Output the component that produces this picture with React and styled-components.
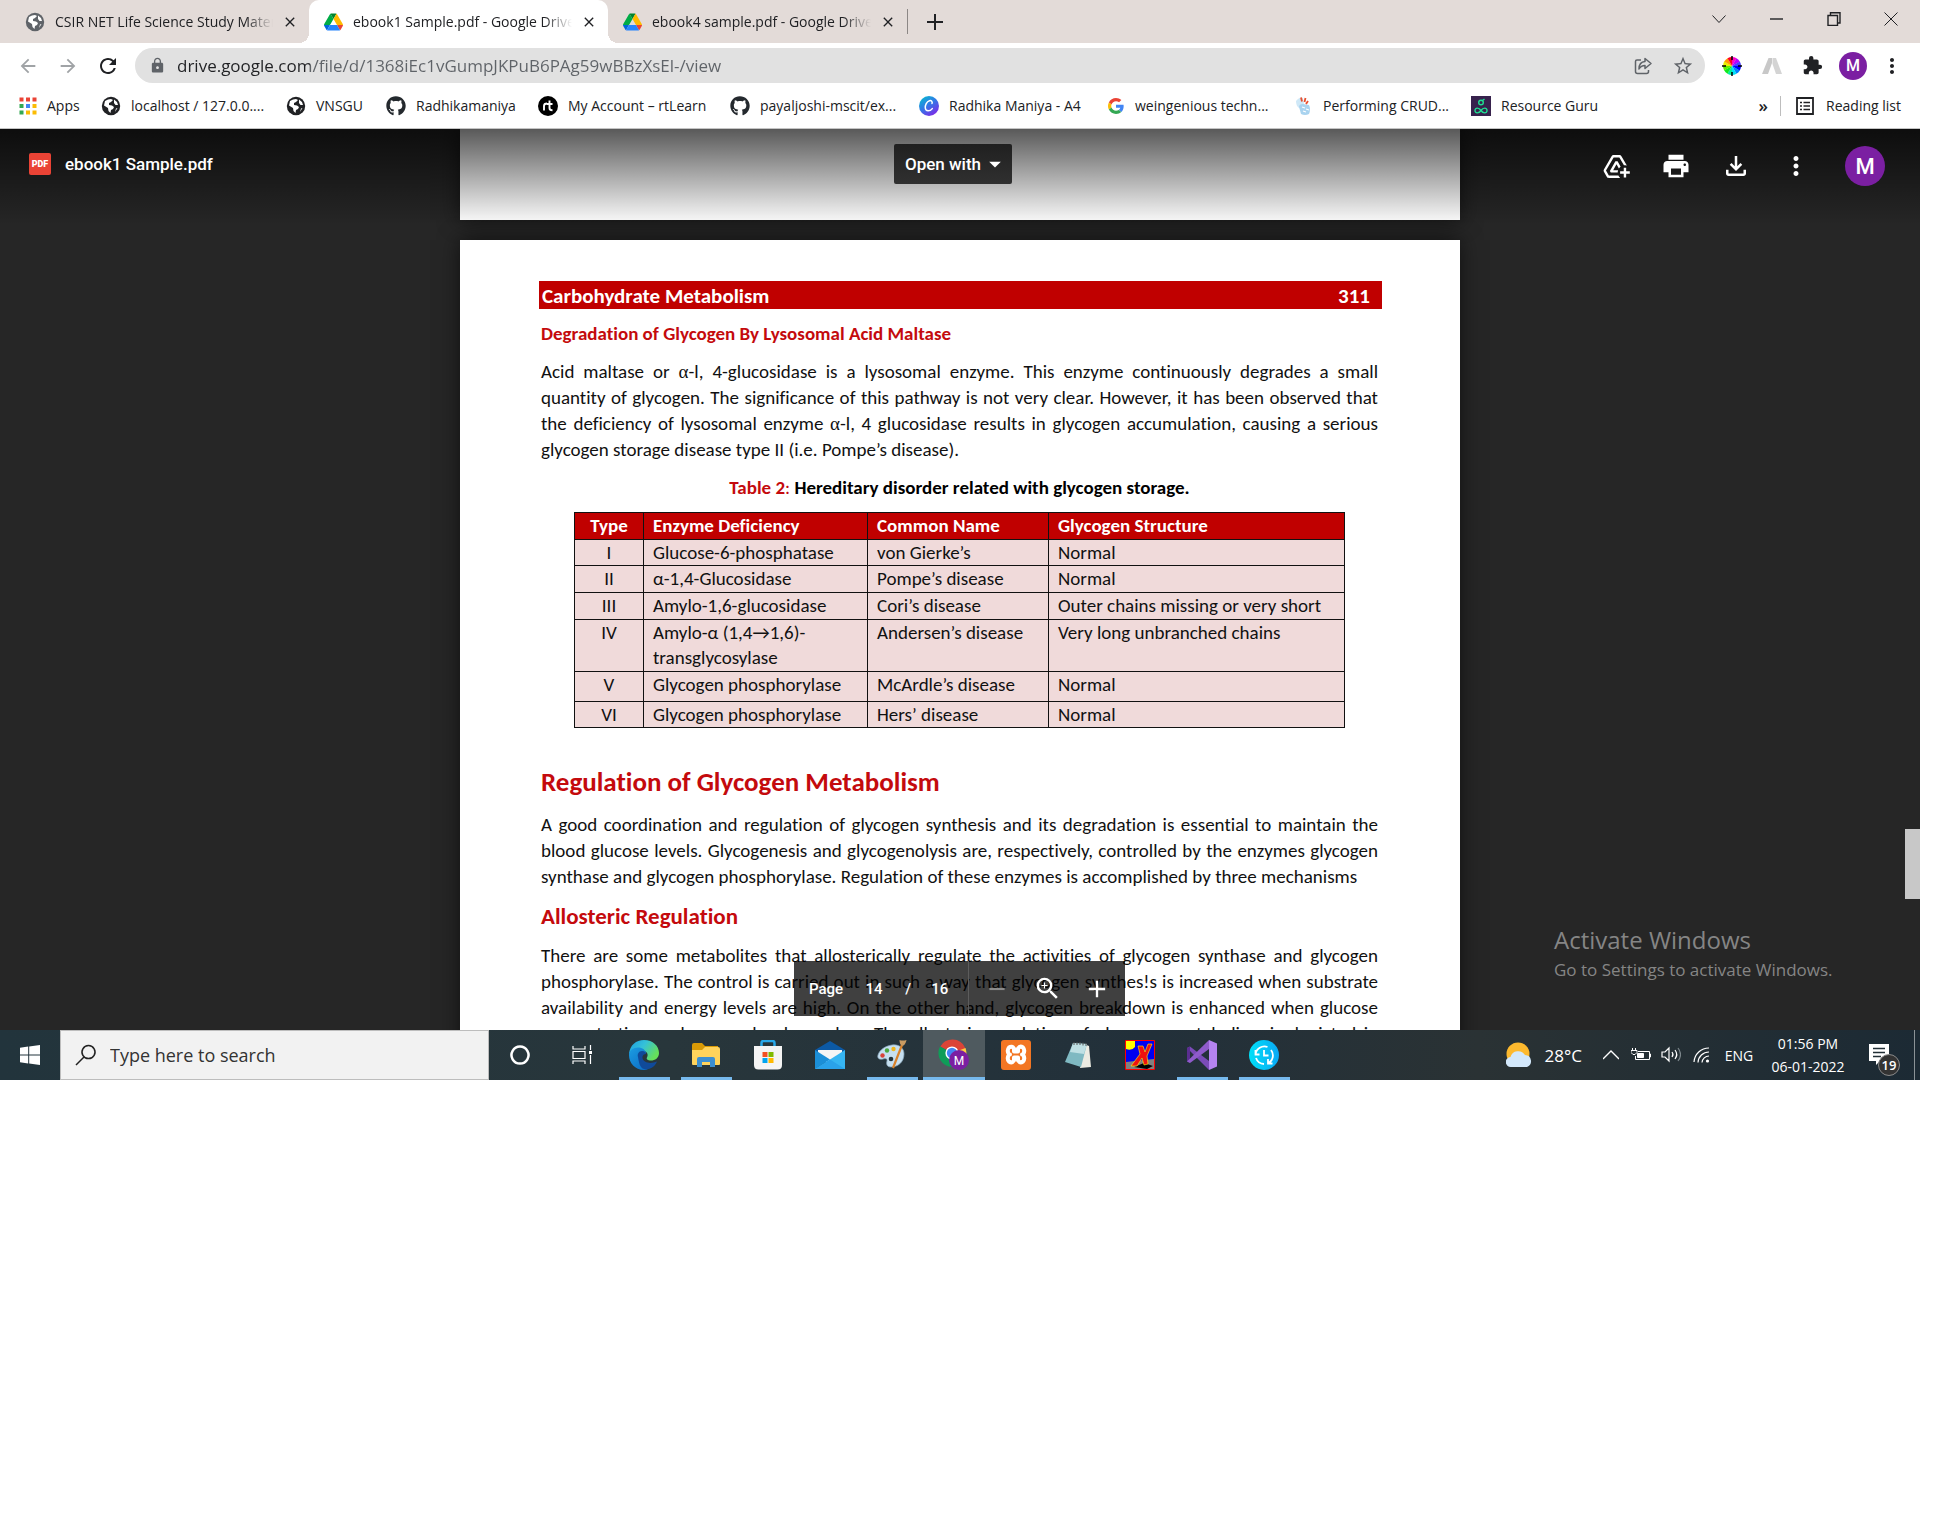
import React from "react";
import styled, { createGlobalStyle, css } from "styled-components";
import {
  MdAddToDrive, MdPrint, MdOutlineFileDownload, MdMoreVert, MdZoomIn, MdAdd, MdRemove,
  MdArrowBack, MdArrowForward, MdRefresh, MdLock, MdStarOutline, MdExtension, MdArrowDropDown,
  MdClose,
} from "react-icons/md";
import { FaGithub } from "react-icons/fa";

const ui = `"Segoe UI", "Open Sans", "Noto Sans", sans-serif`;
const doc = `Calibri, Carlito, Lato, sans-serif`;
const product = `Roboto, "Open Sans", sans-serif`;

const Global = createGlobalStyle`
  *, *::before, *::after { box-sizing: border-box; }
  body { margin: 0; background: #fff; font-family: ${ui}; color: #202124; }
  button { border: 0; padding: 0; background: none; color: inherit; font: inherit; cursor: pointer; }
  input { border: 0; padding: 0; background: none; outline: 0; font: inherit; min-width: 0; }
  a { color: inherit; text-decoration: none; }
  h1, h2, h3, p, table { margin: 0; }
  svg { display: block; flex: none; }
`;

const Screen = styled.div`
  display: flex;
  flex-direction: column;
  margin-right: 16px;
  overflow: hidden;
`;

/* ---------- browser frame ---------- */

const TabStrip = styled.header`
  display: flex;
  align-items: stretch;
  height: 43px;
  padding-left: 10px;
  background: #e3dbd8;
`;

const TabItem = styled.div`
  position: relative;
  display: flex;
  align-items: center;
  flex: 0 1 299px;
  min-width: 0;
  padding: 0 11px 0 15px;
  font-size: 14px;
  border-radius: 10px 10px 0 0;
  ${(p) => p.$active && css`
    background: #fff;
    &::before, &::after {
      content: "";
      position: absolute;
      bottom: 0;
      width: 10px;
      height: 10px;
    }
    &::before { left: -10px; background: radial-gradient(circle at 0 0, transparent 10px, #fff 10px); }
    &::after { right: -10px; background: radial-gradient(circle at 100% 0, transparent 10px, #fff 10px); }
  `}
`;

const TabTitle = styled.a`
  flex: 1;
  min-width: 0;
  margin: 0 9px 0 10px;
  overflow: hidden;
  white-space: nowrap;
  line-height: 20px;
  mask-image: linear-gradient(to right, #000 calc(100% - 28px), transparent);
`;

const TabDivider = styled.span`
  width: 1px;
  height: 25px;
  margin: 9px 0;
  background: #8c8785;
`;

const IconButton = styled.button`
  display: inline-flex;
  align-items: center;
  justify-content: center;
  flex: none;
  width: ${(p) => p.$w || 40}px;
  color: ${(p) => p.$color || "inherit"};
`;

const WindowControls = styled.div`
  display: flex;
  margin-left: auto;
  padding-bottom: 5px;
`;

const Toolbar = styled.nav`
  display: flex;
  align-items: center;
  padding: 5px 3px 5px 8px;
`;

const Omnibox = styled.form`
  display: flex;
  align-items: center;
  flex: 1;
  min-width: 0;
  height: 35px;
  margin: 0 7px;
  padding: 0 2px 0 14px;
  border-radius: 18px;
  background: #e1e1e1;
  color: #5f6368;
`;

const UrlInput = styled.input`
  flex: 1;
  height: 24px;
  margin-left: 11px;
  font-size: 17px;
  color: #5f6368;
  background: linear-gradient(to right, #202124 133px, #5f6368 133px);
  background-clip: text;
  -webkit-text-fill-color: transparent;
`;

const Avatar = styled.button`
  flex: none;
  width: ${(p) => p.$size}px;
  height: ${(p) => p.$size}px;
  margin-left: ${(p) => p.$gap}px;
  border-radius: 50%;
  background: #7b1fa2;
  color: #fff;
  font-family: ${product};
  font-size: ${(p) => p.$font}px;
  font-weight: 500;
`;

const BookmarkBar = styled.nav`
  display: flex;
  align-items: center;
  height: 41px;
  padding: 0 19px 4px 19px;
  border-bottom: 1px solid #c4c4c4;
  font-size: 14px;
  line-height: 20px;
`;

const Bookmark = styled.a`
  display: flex;
  align-items: center;
  flex: ${(p) => (p.$w ? `0 1 ${p.$w}px` : "none")};
  gap: ${(p) => p.$gap || 10}px;
  min-width: 0;
  white-space: nowrap;
`;

const Spacer = styled.span`
  flex: 1;
`;

const MoreBookmarks = styled.button`
  font-size: 17px;
  font-weight: 600;
`;

const Rule = styled.span`
  width: 1px;
  height: 20px;
  margin: 0 15px 0 12px;
  background: #bdbdbd;
`;

/* ---------- document viewer ---------- */

const Viewer = styled.main`
  position: relative;
  height: 901px;
  overflow: hidden;
  background: #262626;
`;

const Pages = styled.div`
  display: flex;
  flex-direction: column;
  align-items: center;
  gap: 20px;
`;

const Sheet = styled.article`
  width: 1000px;
  max-width: 100%;
  min-height: ${(p) => p.$min}px;
  padding: 41px 78px 0 79px;
  background: #fff;
  box-shadow: 0 0 20px rgba(0, 0, 0, 0.6);
  color: #111;
  font-family: ${doc};
  font-size: 19px;
  font-variant-ligatures: none;
  line-height: 26px;
`;

const RunningHead = styled.header`
  display: flex;
  justify-content: space-between;
  padding: 2px 12px 0 3px;
  background: #c00000;
  color: #fff;
  font-size: 21px;
  font-weight: 700;
`;

const Body = styled.div`
  padding: 0 4px 0 2px;
`;

const Heading = styled.h2`
  color: #c40a0d;
  font-size: ${(p) => p.$size}px;
  font-weight: 700;
  line-height: ${(p) => p.$line || 26}px;
  padding: ${(p) => p.$pad};
`;

const Para = styled.p`
  text-align: left;
`;

const Line = styled.span`
  display: block;
  white-space: nowrap;
  text-align: justify;
  text-align-last: ${(p) => (p.$end ? "left" : "justify")};
`;

const Greek = styled.i`
  font-family: "Liberation Serif", serif;
  font-style: normal;
  line-height: 1;
`;

const DataTable = styled.table`
  width: 771px;
  max-width: 100%;
  margin: 0 auto;
  border-collapse: collapse;
  table-layout: fixed;
  caption {
    padding: 12px 0 11px;
    font-weight: 700;
    color: #000;
  }
  caption span { color: #c40a0d; }
  caption i { font-style: normal; font-weight: 400; }
  th, td {
    padding: 0 0 0 9px;
    border: 1px solid #111;
    text-align: left;
    vertical-align: top;
    line-height: 25px;
    background: #f0dada;
    white-space: nowrap;
  }
  th { background: #c00000; color: #fff; }
  th:first-child, td:first-child { padding: 0; text-align: center; }
`;

const Row = styled.tr`
  height: ${(p) => p.$h || 27}px;
`;

const ViewerHeader = styled.header`
  position: absolute;
  inset: 0 0 auto 0;
  display: grid;
  grid-template-columns: 1fr auto 1fr;
  align-items: start;
  height: 96px;
  padding: 15px 35px 0 21px;
  background: linear-gradient(rgba(0, 0, 0, 0.65), rgba(0, 0, 0, 0));
  color: #fff;
  font-family: ${product};
  font-weight: 500;
`;

const FileName = styled.h1`
  display: flex;
  align-items: center;
  gap: 14px;
  height: 40px;
  padding-left: 8px;
  font-size: 17px;
  font-weight: 500;
`;

const PdfBadge = styled.span`
  width: 22px;
  border-radius: 2px;
  background: #ea4335;
  font-size: 9px;
  font-weight: 900;
  line-height: 22px;
  text-align: center;
`;

const OpenWith = styled.button`
  display: flex;
  align-items: center;
  height: 40px;
  padding: 0 3px 0 11px;
  border-radius: 2px;
  background: linear-gradient(#202020, #303030);
  font-size: 17px;
`;

const Actions = styled.div`
  display: flex;
  align-items: center;
  justify-content: flex-end;
  height: 44px;
`;

const Pager = styled.form`
  position: absolute;
  left: 794px;
  bottom: 14px;
  display: flex;
  align-items: center;
  width: 331px;
  height: 55px;
  background: rgba(0, 0, 0, 0.75);
  color: #fff;
  font-family: ${product};
  font-size: 15px;
  font-weight: 500;
`;

const PageField = styled.label`
  display: flex;
  align-items: center;
  width: 176px;
  padding-left: 15px;
  input { width: 38px; color: #fff; text-align: center; margin: 0 12px; }
  span { width: 26px; }
`;

const ZoomTools = styled.div`
  display: flex;
  flex: 1;
  align-self: stretch;
  border-left: 1px solid #5c5c5c;
`;

const ScrollThumb = styled.div`
  position: absolute;
  top: 700px;
  right: 0;
  width: 15px;
  height: 70px;
  background: #c8c8c8;
`;

const Watermark = styled.aside`
  position: absolute;
  right: 82px;
  bottom: 47px;
  width: 284px;
  color: #858585;
  font-size: 17px;
  line-height: 26px;
  white-space: nowrap;
  strong { display: block; font-size: 24px; font-weight: 400; line-height: 34px; }
`;

/* ---------- taskbar ---------- */

const Taskbar = styled.footer`
  display: flex;
  align-items: stretch;
  height: 50px;
  background: linear-gradient(to right, #22343c, #28363b 35%, #22303a 60%, #2a3234 77%, #1c2a34);
  color: #fff;
`;

const SearchBox = styled.label`
  display: flex;
  align-items: center;
  gap: 13px;
  width: 429px;
  padding-left: 14px;
  border: 1px solid #bdbdbd;
  background: #f2f2f2;
  color: #222;
  font-size: 18px;
  input { flex: 1; color: #333; }
  input::placeholder { color: #333; opacity: 1; }
`;

const AppButton = styled.button`
  position: relative;
  display: flex;
  align-items: center;
  justify-content: center;
  flex: none;
  width: 62px;
  background: ${(p) => (p.$active ? "#4f5a5f" : "transparent")};
  &::after {
    content: "";
    position: absolute;
    bottom: 0;
    width: ${(p) => (p.$active ? 62 : 51)}px;
    height: 3px;
    background: ${(p) => (p.$open ? "#76b9ed" : "transparent")};
  }
`;

const Tray = styled.div`
  display: flex;
  align-items: center;
  margin-left: auto;
  font-size: 14px;
`;

const Weather = styled.button`
  display: flex;
  align-items: center;
  gap: 12px;
  font-size: 17px;
  margin-right: 14px;
`;

const Clock = styled.time`
  width: 96px;
  font-size: 14px;
  line-height: 23px;
  text-align: center;
`;

const Notice = styled.button`
  position: relative;
  width: 58px;
  height: 50px;
  padding-left: 13px;
`;

const Count = styled.span`
  position: absolute;
  left: 22px;
  top: 24px;
  width: 22px;
  border: 1px solid #8a8a8a;
  border-radius: 50%;
  background: #333;
  font-size: 13px;
  font-weight: 600;
  line-height: 20px;
  text-align: center;
`;

const ShowDesktop = styled.button`
  width: 6px;
  height: 50px;
  border-left: 1px solid #8a9296;
`;

/* ---------- drawings ---------- */

const Globe = ({ color = "#202124" }) => (
  <svg width="20" height="20" viewBox="0 0 20 20">
    <circle cx="10" cy="10" r="9.2" fill={color} />
    <path d="M4 5 Q7 3 10 3 L12 4 L10 6 L8 7 L8 9 L11 9.5 L13 11 L12 13 L10 14 L9.5 17 L7.5 15 L7 12 L3 9.5Z M13 3.5 L16 6 L17 9 L14.5 9 L13 7Z M15 12.5 L16.5 12 L14 16Z" fill="#fff" />
  </svg>
);
const Drive = () => (
  <svg width="19" height="18" viewBox="0 0 87.3 78">
    <path d="m6.6 66.85 3.85 6.65c.8 1.4 1.95 2.5 3.3 3.3l13.75-23.8h-27.5c0 1.55.4 3.1 1.2 4.5z" fill="#0066da" />
    <path d="m43.65 25-13.75-23.8c-1.35.8-2.5 1.9-3.3 3.3l-25.4 44a9.06 9.06 0 0 0 -1.2 4.5h27.5z" fill="#00ac47" />
    <path d="m73.55 76.8c1.35-.8 2.5-1.9 3.3-3.3l1.6-2.75 7.65-13.25c.8-1.4 1.2-2.95 1.2-4.5h-27.5l5.85 11.5z" fill="#ea4335" />
    <path d="m43.65 25 13.75-23.8c-1.35-.8-2.9-1.2-4.5-1.2h-18.5c-1.6 0-3.15.45-4.5 1.2z" fill="#00832d" />
    <path d="m59.8 53h-32.3l-13.75 23.8c1.35.8 2.9 1.2 4.5 1.2h50.8c1.6 0 3.15-.45 4.5-1.2z" fill="#2684fc" />
    <path d="m73.4 26.5-12.7-22c-.8-1.4-1.95-2.5-3.3-3.3l-13.75 23.8 16.15 28h27.45c0-1.55-.4-3.1-1.2-4.5z" fill="#ffba00" />
  </svg>
);
const AppsGrid = () => {
  const c = ["#ea4335", "#ea4335", "#ea4335", "#34a853", "#4285f4", "#fbbc04", "#34a853", "#fbbc04", "#fbbc04"];
  return (
    <svg width="18" height="18" viewBox="0 0 18 18">
      {c.map((f, i) => <rect key={i} x={(i % 3) * 6.5 + 0.5} y={Math.floor(i / 3) * 6.5 + 0.5} width="4" height="4" fill={f} />)}
    </svg>
  );
};
const RtLogo = () => (
  <svg width="20" height="20" viewBox="0 0 20 20">
    <circle cx="10" cy="10" r="10" fill="#000" />
    <path d="M6 14.5V10q0-2.5 3-2.5M11.5 4.5V12q0 2.3 3 2.3M9 8h5.5" fill="none" stroke="#fff" strokeWidth="1.9" />
  </svg>
);
const CanvaLogo = () => (
  <svg width="20" height="20" viewBox="0 0 20 20">
    <defs><linearGradient id="cv" x1="0" y1="0" x2=".7" y2="1"><stop offset="0" stopColor="#00c4cc" /><stop offset=".5" stopColor="#2f7be6" /><stop offset="1" stopColor="#7d2ae8" /></linearGradient></defs>
    <circle cx="10" cy="10" r="10" fill="url(#cv)" />
    <path d="M13 7.5c.8-2-.7-3.3-2.5-2.8C7.7 5.5 6 9 6.3 12c.4 3.600 4.400 3.800 7 .6" fill="none" stroke="#fff" strokeWidth="1.5" strokeLinecap="round" />
  </svg>
);
const GoogleG = () => (
  <svg width="18" height="18" viewBox="-3 -3 54 54">
    <path fill="#EA4335" d="M24 9.500c3.540 0 6.710 1.220 9.210 3.600l6.850-6.850C35.900 2.380 30.470 0 24 0 14.620 0 6.510 5.380 2.560 13.220l7.980 6.190C12.430 13.720 17.740 9.500 24 9.500z" />
    <path fill="#4285F4" d="M46.980 24.550c0-1.570-.15-3.090-.38-4.550H24v9.020h12.940c-.58 2.960-2.260 5.480-4.780 7.180l7.730 6c4.510-4.180 7.090-10.360 7.090-17.650z" />
    <path fill="#FBBC05" d="M10.530 28.590c-.48-1.450-.76-2.990-.76-4.590s.27-3.140.76-4.590l-7.980-6.190C.92 16.460 0 20.120 0 24s.92 7.540 2.560 10.780l7.970-6.190z" />
    <path fill="#34A853" d="M24 48c6.480 0 11.930-2.130 15.890-5.810l-7.730-6c-2.150 1.450-4.920 2.300-8.160 2.300-6.260 0-11.570-4.220-13.470-9.910l-7.980 6.190C6.510 42.620 14.620 48 24 48z" />
  </svg>
);
const CrudIcon = () => (
  <svg width="20" height="20" viewBox="0 0 20 20">
    <path d="M3 5q4-5 7-3l1 6-5 4q-3-2-3-7z" fill="#cfe8f7" />
    <path d="M6 11q0-3 4-3l6 1q2 4 0 9-4 2-8 0-1-4-2-7z" fill="#a9d3ef" />
    <path d="M8 1.500l1 4M12.500 2l-1 4M15 5l-2 3" stroke="#e8502f" strokeWidth="1.800" />
    <path d="M9 11l3 1M13 13l3 1M10 15l3 1" stroke="#fff" strokeWidth="1.200" />
  </svg>
);
const GuruIcon = () => (
  <svg width="20" height="20" viewBox="0 0 20 20">
    <path d="M0 0h20v20H0z" fill="#37224d" />
    <g fill="none" stroke="#1fdf92" strokeWidth="1.400">
      <circle cx="10" cy="6.500" r="2.300" /><path d="M11.500 4.500L13.500 3" />
      <path d="M10 14.500c-2-3-6-3.200-6 0s4 3 6 0 6-3.200 6 0-4 3-6 0z" />
    </g>
  </svg>
);
const ListIcon = () => (
  <svg width="18" height="18" viewBox="0 0 18 18" fill="none" stroke="#202124" strokeWidth="1.800">
    <path d="M1 1h16v16H1z" /><path d="M4 5.500h2M4 9h2M4 12.500h2M7.500 5.500H14M7.500 9H14M7.500 12.500H14" strokeWidth="1.600" />
  </svg>
);
const ShareIcon = () => (
  <svg width="20" height="20" viewBox="0 0 20 20" fill="none" stroke="#5f6368" strokeWidth="1.500" strokeLinejoin="round">
    <path d="M8 4H4Q2.500 4 2.500 5.500v10Q2.500 17.500 4.500 17.500h9q2 0 2-2V14" />
    <path d="M12 2.500L18 7.500l-6 5V9.500q-4 0-6 3.500 0-7 6-7.500z" />
  </svg>
);
const Wheel = () => {
  const c = ["#ff00c8", "#b400ff", "#4a3cff", "#0000ff", "#0080ff", "#00e0f8", "#00f0a0", "#10e820", "#60f000", "#e8f000", "#ff9a00", "#ff0020"];
  return (
    <svg width="20" height="20" viewBox="-10 -10 20 20">
      {c.map((f, i) => {
        const a = ((i * 30 - 90) * Math.PI) / 180, b = ((i * 30 - 59) * Math.PI) / 180;
        return <path key={i} fill={f} d={`M0 0L${9 * Math.cos(a)} ${9 * Math.sin(a)}A9 9 0 0 1 ${9 * Math.cos(b)} ${9 * Math.sin(b)}Z`} />;
      })}
      <path d="M0-10v4M0 10V6M-10 0h4M10 0H6" stroke="#000" strokeWidth="1.500" />
    </svg>
  );
};
const AdIcon = () => (
  <svg width="20" height="18" viewBox="0 0 20 18">
    <path d="M0 17L6.500 1H10v5L6 17z" fill="#c8c8c8" /><path d="M10.500 1H14l6 16h-6L10.500 7z" fill="#d4d4d4" />
  </svg>
);
const Thin = ({ d, size = 14, width = 1, color = "currentColor" }) => (
  <svg width={size} height={size} viewBox={`0 0 ${size} ${size}`} fill="none" stroke={color} strokeWidth={width}><path d={d} /></svg>
);

const WinLogo = () => (
  <svg width="20" height="20" viewBox="0 0 20 20" fill="#fff"><path d="M0 2.800L8.200 1.600V9.500H0zM9.200 1.500L20 0v9.500H9.200zM0 10.500h8.200v7.900L0 17.200zM9.200 10.500H20V20L9.200 18.500z" /></svg>
);
const TaskView = () => (
  <svg width="20" height="20" viewBox="0 0 20 20" fill="none" stroke="#fff" strokeWidth="1.200">
    <path d="M1 1v3h12V1M1 19v-3h12v3M1 6.500h12v7H1zM18.500 0v5M18.500 10v9" /><path d="M17 6h3v3h-3z" fill="#fff" stroke="none" />
  </svg>
);
const Edge = () => (
  <svg width="30" height="30" viewBox="0 0 30 30">
    <defs>
      <linearGradient id="e1" x1="0" y1="0" x2="1" y2=".5"><stop offset="0" stopColor="#1b9de2" /><stop offset=".5" stopColor="#35c1d8" /><stop offset="1" stopColor="#66e05a" /></linearGradient>
      <linearGradient id="e2" x1="0" y1="0" x2="1" y2="1"><stop offset="0" stopColor="#1b9de2" /><stop offset="1" stopColor="#0a64c0" /></linearGradient>
    </defs>
    <path d="M0 14C1 5 7 0 15 0c9 0 15 6 15 13 0 5-4 7.500-8 7.500-3.500 0-5-1.500-4-3 1.800-3 0-7-5-7S3 11 0 14z" fill="url(#e1)" />
    <path d="M0 15C0 10 5 7 10 7.500c4 .5 7 3 7 6-4-2-7 1-6 5 1 5 6 8 13 6.500C21 28.500 18 30 15 30 6 30 0 23 0 15z" fill="url(#e2)" />
    <path d="M9 17c-1-3 1-6 4-6 3 0 4 1.500 4 3-4 0-5 5-1 7.500 4 2.300 8 1.500 12 0-3 7-9 8.500-13 7.500S10 23 9 17z" fill="#104a9a" />
  </svg>
);
const Folder = () => (
  <svg width="28" height="24" viewBox="0 0 28 24">
    <path d="M0 2Q0 0 2 0h8l3 3h13v6H0z" fill="#d99a06" /><path d="M0 7h10l3-3h13q2 0 2 2v15q0 1-1 1H1q-1 0-1-1z" fill="#ffd35c" />
    <path d="M5 24v-8q0-2 2-2h14q2 0 2 2v8h-5v-5h-8v5z" fill="#3d8fd1" />
  </svg>
);
const Store = () => (
  <svg width="30" height="30" viewBox="0 0 30 30">
    <path d="M8.500 9V3q0-2 2-2h9q2 0 2 2v6" fill="none" stroke="#28a8ea" strokeWidth="2.500" />
    <path d="M1 6h28v19q0 4.500-4.500 4.500h-19Q1 29.500 1 25z" fill="#f4f4f4" />
    <path d="M9.500 12h5v5h-5z" fill="#f25022" /><path d="M15.500 12h5v5h-5z" fill="#7fba00" /><path d="M9.500 18h5v5h-5z" fill="#00a4ef" /><path d="M15.500 18h5v5h-5z" fill="#ffb900" />
  </svg>
);
const Mail = () => (
  <svg width="30" height="28" viewBox="0 0 30 28">
    <path d="M0 9L15 0l15 9v5H0z" fill="#0c59a4" /><path d="M3 9h24v12H3z" fill="#f5f5f5" />
    <path d="M0 9l15 9.500L0 28z" fill="#1b8fd8" /><path d="M30 9v19H0z" fill="#36b5f2" /><path d="M15 18.500L30 28H0z" fill="#2aa2ea" />
  </svg>
);
const Paint = () => (
  <svg width="30" height="30" viewBox="0 0 30 30">
    <path d="M15 5c7-1 12 3 12 9 0 8-6 13-13 13-4 0-5-3-4-6 .6-2-1-3-4-2-4 1-6-1-5-4C2.500 10 8 6 15 5z" fill="#c6dff0" stroke="#8aa9bd" strokeWidth=".7" />
    <circle cx="5.500" cy="15.500" r="2.200" fill="#d8433a" /><circle cx="10" cy="10.500" r="2.200" fill="#4ba83f" /><circle cx="16.500" cy="9" r="2.200" fill="#eeb620" /><circle cx="14" cy="19" r="2.300" fill="#25343b" />
    <path d="M25 5L16 28" stroke="#d9822b" strokeWidth="2.200" /><path d="M22.500 0q3 1 7 0-1 5-4 6-3-1-3-6z" fill="#c99b62" />
  </svg>
);
const Chrome = () => (
  <svg width="34" height="34" viewBox="-1 0 34 34">
    <path d="M14 15L2.300 8.500A14 14 0 0 1 27 9.500L27.500 12z" fill="#db4437" />
    <path d="M14 15l13.500-5a14 14 0 0 1-12.500 19z" fill="#ffcd40" />
    <path d="M14 15L2 8.500A14 14 0 0 0 14 29z" fill="#0f9d58" />
    <circle cx="14" cy="15" r="6.600" fill="#fff" /><circle cx="14" cy="15" r="5.200" fill="#4285f4" />
    <circle cx="21" cy="22" r="10" fill="#7b1fa2" /><text x="21" y="26.500" textAnchor="middle" fill="#fff" fontFamily="Roboto, sans-serif" fontSize="12">M</text>
  </svg>
);
const Xampp = () => (
  <svg width="30" height="30" viewBox="0 0 30 30">
    <rect width="30" height="30" rx="3" fill="#f37623" />
    <path d="M9 14.500H8q-2.500-4 0-7 3-2 5 1v3h4v-3q2-3 5-1 2.500 3 0 7h-1 1q2.500 4 0 7-3 2-5-1v-3h-4v3q-2 3-5 1-2.500-3 0-7z" fill="none" stroke="#fff" strokeWidth="4" strokeLinejoin="round" />
  </svg>
);
const Notepad = () => (
  <svg width="28" height="28" viewBox="0 0 28 28">
    <path d="M20 3l5 2 2 21-11 1z" fill="#ecebe2" /><path d="M9 2l14 1-6 23-16-5z" fill="#7fb9c2" /><path d="M9 2l14 1-3 10-14-2z" fill="#bfe0e4" />
    <path d="M10 1v3M13 1v3M16 1v3M19 1.500v3M22 2v3" stroke="#555" />
  </svg>
);
const Xming = () => (
  <svg width="30" height="30" viewBox="0 0 30 30">
    <path d="M1 1h28v28H1z" fill="#0000f0" /><path d="M1 22l28-3v10H1z" fill="#808080" /><path d="M1 1h9v6q-3 4-9 2z" fill="#ffff00" /><path d="M9 27l10-4 9 3-6 3z" fill="#000" />
    <path d="M13 6h5l2 6 3-8h4l-5 12 1 8-4 1-2-7-5 8H6l9-12z" fill="#f01010" stroke="#ffff00" strokeWidth=".6" /><path d="M.5.5h29v29H.5z" fill="none" stroke="#f00" />
  </svg>
);
const VisualStudio = () => (
  <svg width="30" height="30" viewBox="0 0 30 30">
    <path d="M0 8l3-1.500L22 21v9z" fill="#7b4bb8" /><path d="M0 8l3-1.500V23L0 21.500z" fill="#5b2e91" /><path d="M0 21.500L22 0v9L3 23z" fill="#8f5bcb" /><path d="M22 0l8 3.500v23L22 30z" fill="#b583f0" />
  </svg>
);
const SyncApp = () => (
  <svg width="30" height="30" viewBox="0 0 30 30">
    <defs><linearGradient id="sy"><stop offset="0" stopColor="#00e0f8" /><stop offset="1" stopColor="#0aa8f5" /></linearGradient></defs>
    <circle cx="15" cy="15" r="15" fill="url(#sy)" />
    <g fill="none" stroke="#fff" strokeWidth="1.800"><path d="M6.500 10v4.500h4M6.500 14.500a9 9 0 0 1 12-7.500M7 18a9 9 0 0 0 8 6M19 23.500a9 9 0 0 0 3-13.500M19 19v4.500h4.500M15 10v5.500h4.500" /></g>
  </svg>
);
const Sun = () => (
  <svg width="27" height="26" viewBox="0 0 27 26">
    <circle cx="12" cy="12" r="11.500" fill="#fdb92e" />
    <path d="M5 25a5 5 0 0 1-.5-10A8 8 0 0 1 19 13a6.200 6.200 0 0 1 2 12z" fill="#d3e8fb" />
  </svg>
);
const Battery = () => (
  <svg width="20" height="14" viewBox="0 0 20 14" fill="none" stroke="#fff"><path d="M7 3.500h11.500v8H4.500V8M18.500 6h1v3h-1M1.500 0v3M4.500 0v3M0 2.500h6v2L4 6.500H2L0 4.500z" /><path d="M6.500 5.500h6v4h-6z" fill="#fff" /></svg>
);
const Sound = () => (
  <svg width="20" height="18" viewBox="0 0 20 18" fill="none" stroke="#fff" strokeWidth="1.200"><path d="M1 6h3l4-4v13l-4-4H1zM11 6q2 2.500 0 5M14 4q3.500 4.500 0 9" /><path d="M17 2q5 6.500 0 13" stroke="#7d878c" /></svg>
);
const Wifi = () => (
  <svg width="18" height="18" viewBox="0 0 18 18" fill="none" stroke="#fff" strokeWidth="1.200"><path d="M1 16A15 15 0 0 1 16 2M5 16.500A11 11 0 0 1 16 6M9 16.500A7 7 0 0 1 16 10" /><circle cx="14.500" cy="15" r="1.600" fill="#fff" stroke="none" /></svg>
);

/* ---------- data ---------- */

const tabs = [
  { title: "CSIR NET Life Science Study Material", icon: <Globe color="#5f6368" /> },
  { title: "ebook1 Sample.pdf - Google Drive", icon: <Drive />, active: true },
  { title: "ebook4 sample.pdf - Google Drive", icon: <Drive /> },
];

const bookmarks = [
  ["Apps", <AppsGrid />, 82],
  ["localhost / 127.0.0....", <Globe />, 185],
  ["VNSGU", <Globe />, 100],
  ["Radhikamaniya", <FaGithub size={20} color="#24292e" />, 152],
  ["My Account – rtLearn", <RtLogo />, 192],
  ["payaljoshi-mscit/ex...", <FaGithub size={20} color="#24292e" />, 189],
  ["Radhika Maniya - A4", <CanvaLogo />, 188],
  ["weingenious techn...", <GoogleG />, 186],
  ["Performing CRUD...", <CrudIcon />, 178],
  ["Resource Guru", <GuruIcon />, 130],
];

const disorders = [
  ["I", "Glucose-6-phosphatase", "von Gierke’s", "Normal", 26],
  ["II", "α-1,4-Glucosidase", "Pompe’s disease", "Normal", 27],
  ["III", "Amylo-1,6-glucosidase", "Cori’s disease", "Outer chains missing or very short", 27],
  ["IV", <>Amylo-α (1,4→1,6)-<br />transglycosylase</>, "Andersen’s disease", "Very long unbranched chains", 52],
  ["V", "Glycogen phosphorylase", "McArdle’s disease", "Normal", 30],
  ["VI", "Glycogen phosphorylase", "Hers’ disease", "Normal", 26],
];

const apps = [
  ["Cortana", <Thin size={20} width={2.5} d="M10 1.500a8.500 8.500 0 1 0 .01 0z" />],
  ["Task view", <TaskView />],
  ["Edge", <Edge />, true],
  ["File Explorer", <Folder />, true],
  ["Store", <Store />],
  ["Mail", <Mail />],
  ["Paint", <Paint />, true],
  ["Chrome", <Chrome />, true, true],
  ["XAMPP", <Xampp />],
  ["Notepad", <Notepad />],
  ["Xming", <Xming />],
  ["Visual Studio", <VisualStudio />, true],
  ["Sync", <SyncApp />, true],
];

const Text = ({ lines, ragged }) => (
  <Para>
    {lines.map((l, i) => <Line key={i} $end={ragged && i === lines.length - 1}>{l}</Line>)}
  </Para>
);

export default function App() {
  const stop = (e) => e.preventDefault();
  return (
    <Screen>
      <Global />
      <TabStrip>
        {tabs.map((t) => (
          <TabItem key={t.title} $active={t.active}>
            {t.icon}
            <TabTitle href="#">{t.title}</TabTitle>
            <IconButton $w={16} aria-label="Close tab"><MdClose size={16} /></IconButton>
          </TabItem>
        ))}
        <TabDivider />
        <IconButton $w={54} aria-label="New tab"><Thin size={16} width={2} d="M8 0v16M0 8h16" /></IconButton>
        <WindowControls>
          <IconButton $w={58} aria-label="Search tabs"><Thin d="M.5 3.500l6.500 7 6.500-7" /></IconButton>
          <IconButton $w={57} aria-label="Minimize"><Thin width={1.400} d="M0 7h13" /></IconButton>
          <IconButton $w={57} aria-label="Restore"><Thin width={1.400} d="M1 3.500h9.500v10H1zM3.500 3V.800h9.500V11H11" /></IconButton>
          <IconButton $w={58} aria-label="Close"><Thin d="M.5.5l13 13M13.500.5l-13 13" /></IconButton>
        </WindowControls>
      </TabStrip>

      <Toolbar>
        <IconButton $color="#a0a3a6" aria-label="Back"><MdArrowBack size={22} /></IconButton>
        <IconButton $color="#a0a3a6" aria-label="Forward"><MdArrowForward size={22} /></IconButton>
        <IconButton aria-label="Reload"><MdRefresh size={24} /></IconButton>
        <Omnibox onSubmit={stop}>
          <MdLock size={17} />
          <UrlInput aria-label="Address" defaultValue="drive.google.com/file/d/1368iEc1vGumpJKPuB6PAg59wBBzXsEl-/view" />
          <IconButton type="button" aria-label="Share"><ShareIcon /></IconButton>
          <IconButton type="button" aria-label="Bookmark"><MdStarOutline size={22} /></IconButton>
        </Omnibox>
        <IconButton aria-label="Colour picker"><Wheel /></IconButton>
        <IconButton aria-label="Extension"><AdIcon /></IconButton>
        <IconButton aria-label="Extensions"><MdExtension size={21} /></IconButton>
        <Avatar $size={28} $font={16} $gap={7}>M</Avatar>
        <IconButton $w={50} aria-label="Menu"><MdMoreVert size={24} /></IconButton>
      </Toolbar>

      <BookmarkBar>
        {bookmarks.map(([label, icon, w]) => (
          <Bookmark key={label} href="#" $w={w}>{icon}{label}</Bookmark>
        ))}
        <Spacer />
        <MoreBookmarks aria-label="More bookmarks">»</MoreBookmarks>
        <Rule />
        <Bookmark href="#" $gap={12}><ListIcon />Reading list</Bookmark>
      </BookmarkBar>

      <Viewer>
        <Pages>
          <Sheet $min={91} />
          <Sheet $min={1290}>
            <RunningHead><span>Carbohydrate Metabolism</span><span>311</span></RunningHead>
            <Body>
              <Heading $size={19} $pad="12px 0 12px">Degradation of Glycogen By Lysosomal Acid Maltase</Heading>
              <Text ragged lines={[
                <>Acid maltase or <Greek>α</Greek>-l, 4-glucosidase is a lysosomal enzyme. This enzyme continuously degrades a small</>,
                "quantity of glycogen. The significance of this pathway is not very clear. However, it has been observed that",
                <>the deficiency of lysosomal enzyme <Greek>α</Greek>-l, 4 glucosidase results in glycogen accumulation, causing a serious</>,
                "glycogen storage disease type II (i.e. Pompe’s disease).",
              ]} />
              <DataTable>
                <caption><span>Table 2<i>:</i></span> Hereditary disorder related with glycogen storage.</caption>
                <colgroup><col width="69" /><col width="224" /><col width="181" /><col /></colgroup>
                <thead><Row><th>Type</th><th>Enzyme Deficiency</th><th>Common Name</th><th>Glycogen Structure</th></Row></thead>
                <tbody>
                  {disorders.map(([type, enzyme, name, structure, h]) => (
                    <Row key={type} $h={h}><td>{type}</td><td>{enzyme}</td><td>{name}</td><td>{structure}</td></Row>
                  ))}
                </tbody>
              </DataTable>
              <Heading $size={27} $line={30} $pad="39px 0 15px">Regulation of Glycogen Metabolism</Heading>
              <Text ragged lines={[
                "A good coordination and regulation of glycogen synthesis and its degradation is essential to maintain the",
                "blood glucose levels. Glycogenesis and glycogenolysis are, respectively, controlled by the enzymes glycogen",
                "synthase and glycogen phosphorylase. Regulation of these enzymes is accomplished by three mechanisms",
              ]} />
              <Heading as="h3" $size={23} $pad="13px 0 14px">Allosteric Regulation</Heading>
              <Text lines={[
                "There are some metabolites that allosterically regulate the activities of glycogen synthase and glycogen",
                "phosphorylase. The control is carried out in such a way that glycogen synthes!s is increased when substrate",
                "availability and energy levels are high. On the other hand, glycogen breakdown is enhanced when glucose",
                "concentration and energy levels are low. The allosteric regulation of glycogen metabolism is depicted in",
              ]} />
            </Body>
          </Sheet>
        </Pages>

        <ViewerHeader>
          <FileName><PdfBadge>PDF</PdfBadge>ebook1 Sample.pdf</FileName>
          <OpenWith>Open with<MdArrowDropDown size={28} /></OpenWith>
          <Actions>
            <IconButton $w={60} aria-label="Add to Drive"><MdAddToDrive size={29} /></IconButton>
            <IconButton $w={60} aria-label="Print"><MdPrint size={30} /></IconButton>
            <IconButton $w={60} aria-label="Download"><MdOutlineFileDownload size={30} /></IconButton>
            <IconButton $w={60} aria-label="More"><MdMoreVert size={30} /></IconButton>
            <Avatar $size={40} $font={22} $gap={19}>M</Avatar>
          </Actions>
        </ViewerHeader>

        <Watermark><strong>Activate Windows</strong>Go to Settings to activate Windows.</Watermark>
        <ScrollThumb />

        <Pager onSubmit={stop}>
          <PageField>Page<input defaultValue="14" aria-label="Page number" /><span>/</span>16</PageField>
          <ZoomTools>
            <IconButton type="button" $w={56} $color="#8a8a8a" aria-label="Zoom out"><MdRemove size={26} /></IconButton>
            <IconButton type="button" $w={44} aria-label="Reset zoom"><MdZoomIn size={29} /></IconButton>
            <IconButton type="button" $w={56} aria-label="Zoom in"><MdAdd size={28} /></IconButton>
          </ZoomTools>
        </Pager>
      </Viewer>

      <Taskbar>
        <IconButton $w={60} aria-label="Start"><WinLogo /></IconButton>
        <SearchBox>
          <Thin size={22} width={1.500} d="M13.500 1.500a6.500 6.500 0 1 0 .01 0zM9 13L1 21" />
          <input type="search" aria-label="Search" placeholder="Type here to search" />
        </SearchBox>
        {apps.map(([name, icon, open, active]) => (
          <AppButton key={name} aria-label={name} $open={open} $active={active}>{icon}</AppButton>
        ))}
        <Tray>
          <Weather><Sun />28°C</Weather>
          <IconButton $w={30} aria-label="Hidden icons"><Thin size={16} width={1.300} d="M0 12l8-8 8 8" /></IconButton>
          <IconButton $w={30} aria-label="Battery"><Battery /></IconButton>
          <IconButton $w={30} aria-label="Volume"><Sound /></IconButton>
          <IconButton $w={32} aria-label="Network"><Wifi /></IconButton>
          <IconButton $w={42} aria-label="Language">ENG</IconButton>
          <Clock>01:56 PM<br />06-01-2022</Clock>
          <Notice aria-label="Notifications">
            <svg width="20" height="22" viewBox="0 0 20 22"><path d="M0 0h20v17h-9l-4 4v-4H0z" fill="#fff" /><path d="M4 4.500h12M4 8.500h12M4 12.500h8" stroke="#222f36" strokeWidth="1.400" /></svg>
            <Count>19</Count>
          </Notice>
          <ShowDesktop aria-label="Show desktop" />
        </Tray>
      </Taskbar>
    </Screen>
  );
}
